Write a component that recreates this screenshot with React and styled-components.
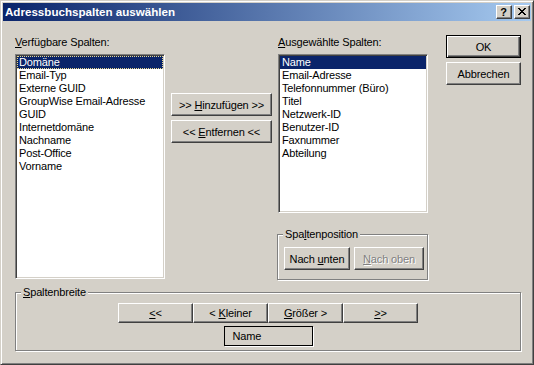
import React from 'react';
import styled, {createGlobalStyle, css} from 'styled-components';

const GlobalStyle = createGlobalStyle`
  html, body {
    margin: 0;
    padding: 0;
    background: #d4d0c8;
  }
  body {
    font-family: "Liberation Sans", Arial, sans-serif;
    font-size: 11px;
    letter-spacing: -0.15px;
    color: #000;
  }
`;

const available = [
  'Domäne',
  'Email-Typ',
  'Externe GUID',
  'GroupWise Email-Adresse',
  'GUID',
  'Internetdomäne',
  'Nachname',
  'Post-Office',
  'Vorname',
];

const chosen = [
  'Name',
  'Email-Adresse',
  'Telefonnummer (Büro)',
  'Titel',
  'Netzwerk-ID',
  'Benutzer-ID',
  'Faxnummer',
  'Abteilung',
];

//close glyph, pixel art 8x7
const closePixels = [];
for (let y = 0; y < 7; y++) {
  closePixels.push([y, y], [y + 1, y], [6 - y, y], [7 - y, y]);
}

const App = () => {
  return (
    <>
      <GlobalStyle />
      <Window>
        <TitleBar>
          <Title>Adressbuchspalten auswählen</Title>
          <CaptionButtons>
            <CaptionButton>?</CaptionButton>
            <CaptionButton>
              <svg width="8" height="7" viewBox="0 0 8 7" shapeRendering="crispEdges">
                {closePixels.map(([x, y], i) => (
                  <rect key={i} x={x} y={y} width="1" height="1" fill="#000" />
                ))}
              </svg>
            </CaptionButton>
          </CaptionButtons>
        </TitleBar>

        <Body>
          <MainRow>
            <Column>
              <Label>
                <u>V</u>erfügbare Spalten:
              </Label>
              <ListBox $height={225}>
                {available.map((item, i) => (
                  <Item key={item} $selected={i === 0} $focused={i === 0}>
                    {item}
                  </Item>
                ))}
              </ListBox>
            </Column>

            <MoveButtons>
              <Button $w={101}>
                &gt;&gt; <u>H</u>inzufügen &gt;&gt;
              </Button>
              <Button $w={101}>
                &lt;&lt; <u>E</u>ntfernen &lt;&lt;
              </Button>
            </MoveButtons>

            <Column $gap={6}>
              <Label>
                <u>A</u>usgewählte Spalten:
              </Label>
              <ListBox $height={159}>
                {chosen.map((item, i) => (
                  <Item key={item} $selected={i === 0}>
                    {item}
                  </Item>
                ))}
              </ListBox>
              <Group $mt={15} $shift={-1}>
                <Legend>
                  Spa<u>l</u>tenposition
                </Legend>
                <PositionRow>
                  <Button $w={66}>
                    Nach <u>u</u>nten
                  </Button>
                  <Button $w={70} disabled>
                    <u>N</u>ach oben
                  </Button>
                </PositionRow>
              </Group>
            </Column>

            <ActionButtons>
              <Button $w={75} $default>
                OK
              </Button>
              <Button $w={75}>Abbrechen</Button>
            </ActionButtons>
          </MainRow>

          <Group $mt={6} $width={506}>
            <Legend>
              <u>S</u>paltenbreite
            </Legend>
            <WidthArea>
              <WidthButtons>
                <Button $w={75} $h={20}>
                  <u>&lt;</u>&lt;
                </Button>
                <Button $w={75} $h={20}>
                  &lt; <u>K</u>leiner
                </Button>
                <Button $w={75} $h={20}>
                  <u>G</u>rößer &gt;
                </Button>
                <Button $w={75} $h={20}>
                  <u>&gt;</u>&gt;
                </Button>
              </WidthButtons>
              <NameBox>Name</NameBox>
            </WidthArea>
          </Group>
        </Body>
      </Window>
    </>
  );
};

const Window = styled.div`
  width: 534px;
  height: 365px;
  box-sizing: border-box;
  background: #d4d0c8;
  border: 1px solid;
  border-color: #d4d0c8 #404040 #404040 #d4d0c8;
  box-shadow: inset 1px 1px #fff, inset -1px -1px #808080;
  padding: 2px;
  display: flex;
  flex-direction: column;
`;

const TitleBar = styled.div`
  height: 18px;
  flex: none;
  background: linear-gradient(to right, #0a246a, #a6caf0);
  display: flex;
  align-items: center;
  padding: 0 1px 0 2px;
`;

const Title = styled.div`
  flex: 1;
  color: #fff;
  font-family: "Liberation Sans", Arial, sans-serif;
  font-weight: bold;
  font-size: 11.6px;
  letter-spacing: 0;
  line-height: 18px;
  white-space: nowrap;
`;

const CaptionButtons = styled.div`
  display: flex;
  gap: 2px;
`;

const CaptionButton = styled.div`
  width: 16px;
  height: 14px;
  box-sizing: border-box;
  background: #d4d0c8;
  border: 1px solid;
  border-color: #fff #404040 #404040 #fff;
  box-shadow: inset -1px -1px #808080;
  display: flex;
  align-items: center;
  justify-content: center;
  font-weight: bold;
  font-size: 11px;
  line-height: 12px;
  padding: 0 1px 1px 0;
`;

const Body = styled.div`
  flex: 1;
  padding: 14px 0 0 12px;
  display: flex;
  flex-direction: column;
`;

const MainRow = styled.div`
  display: flex;
  align-items: flex-start;
`;

const Column = styled.div`
  width: 150px;
  margin-left: ${(p) => p.$gap || 0}px;
  display: flex;
  flex-direction: column;
`;

const Label = styled.div`
  height: 13px;
  line-height: 13px;
  padding-top: 1px;
  margin-bottom: 5px;
  white-space: nowrap;
`;

const ListBox = styled.div`
  height: ${(p) => p.$height}px;
  box-sizing: border-box;
  background: #fff;
  border: 1px solid;
  border-color: #808080 #fff #fff #808080;
  box-shadow: inset 1px 1px #404040, inset -1px -1px #d4d0c8;
  padding: 1px;
  overflow: hidden;
`;

const Item = styled.div`
  height: 13px;
  line-height: 13px;
  padding-left: 2px;
  white-space: nowrap;
  box-sizing: border-box;
  ${(p) =>
    p.$selected &&
    css`
      background: #0a246a;
      color: #fff;
    `}
  ${(p) =>
    p.$focused &&
    css`
      outline: 1px dotted #e8d890;
      outline-offset: -1px;
    `}
`;

const MoveButtons = styled.div`
  margin-left: 6px;
  padding-top: 58px;
  display: flex;
  flex-direction: column;
  gap: 4px;
`;

const ActionButtons = styled.div`
  margin-left: 18px;
  display: flex;
  flex-direction: column;
  gap: 4px;
`;

const Button = styled.button`
  width: ${(p) => p.$w}px;
  height: ${(p) => p.$h || 23}px;
  box-sizing: border-box;
  margin: 0;
  padding: 0;
  background: #d4d0c8;
  font: inherit;
  letter-spacing: inherit;
  color: #000;
  border: 1px solid;
  border-color: #fff #404040 #404040 #fff;
  box-shadow: inset -1px -1px #808080;
  white-space: nowrap;
  text-align: center;
  ${(p) =>
    p.$default &&
    css`
      border-color: #000;
      box-shadow: inset 1px 1px #fff, inset -1px -1px #404040,
        inset -2px -2px #808080;
    `}
  &:disabled {
    color: #808080;
    text-shadow: 1px 1px #fff;
  }
`;

const Group = styled.fieldset`
  margin: ${(p) => p.$mt || 0}px 0 0 ${(p) => p.$shift || 0}px;
  padding: 0;
  min-inline-size: 0;
  width: ${(p) => (p.$width ? `${p.$width}px` : 'auto')};
  box-sizing: border-box;
  border: 1px solid #808080;
  box-shadow: inset 1px 1px #fff, 1px 1px #fff;
`;

const Legend = styled.legend`
  margin-left: 5px;
  padding: 0 2px;
  line-height: 13px;
  height: 13px;
  background: #d4d0c8;
`;

const PositionRow = styled.div`
  display: flex;
  gap: 4px;
  padding: 6px 0 9px 6px;
`;

const WidthArea = styled.div`
  display: flex;
  flex-direction: column;
  align-items: center;
  padding: 4px 0 4px;
`;

const WidthButtons = styled.div`
  display: flex;
`;

const NameBox = styled.div`
  width: 89px;
  height: 20px;
  box-sizing: border-box;
  margin-top: 3px;
  border: 1px solid #000;
  box-shadow: 1px 1px #fff;
  padding-left: 8px;
  line-height: 18px;
`;

export default App;
